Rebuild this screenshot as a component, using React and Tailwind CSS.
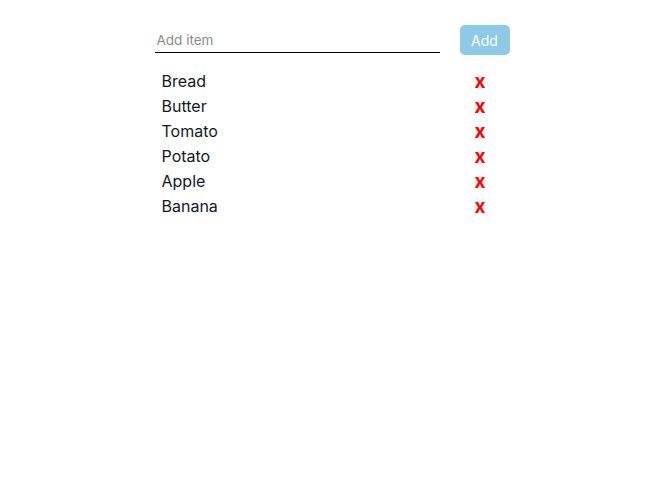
import { useState } from "react";

const initial = ["Bread", "Butter", "Tomato", "Potato", "Apple", "Banana"];

export default function App() {
  const [items, setItems] = useState(initial);
  const [text, setText] = useState("");

  const add = () => {
    if (!text.trim()) return;
    setItems([...items, text.trim()]);
    setText("");
  };

  return (
    <div className="min-h-[499px] bg-white font-['Inter',sans-serif] text-[#111827]">
      <div className="mx-auto w-[355px] pt-[25px]">
        <div className="flex items-start gap-5">
          <input
            className="mt-[2px] h-[26px] w-[285px] border-b border-black px-[2px] pt-[1px] text-[13.5px] outline-none placeholder:text-[#8a8a8a]"
            placeholder="Add item"
            value={text}
            onChange={(e) => setText(e.target.value)}
          />
          <button
            onClick={add}
            className="h-[30px] w-[50px] rounded-[5px] bg-[#8ecae6] text-[14px] text-white"
          >
            Add
          </button>
        </div>
        <ul className="mt-[13px]">
          {items.map((item, i) => (
            <li key={i} className="flex h-[25px] items-center pl-[7px]">
              <span className="w-[313px] text-[16px]">{item}</span>
              <button
                onClick={() => setItems(items.filter((_, j) => j !== i))}
                className="mt-[2px] text-[19px] font-bold leading-none text-[#ff0000]"
              >
                x
              </button>
            </li>
          ))}
        </ul>
      </div>
    </div>
  );
}
